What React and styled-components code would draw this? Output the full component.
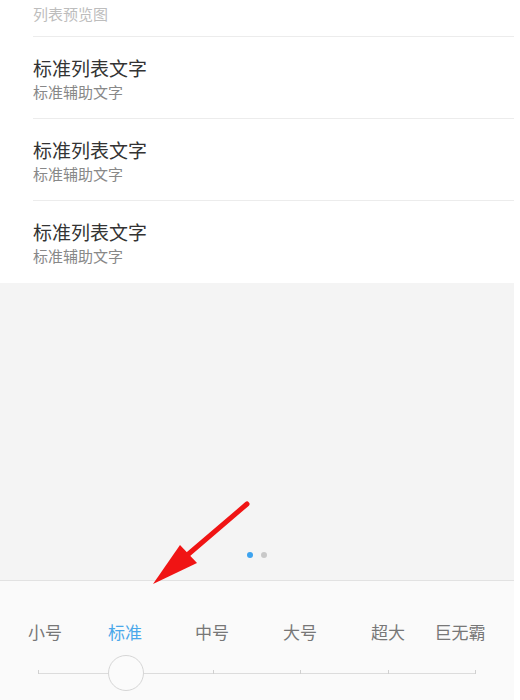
import React from "react";
import styled, { createGlobalStyle } from "styled-components";

const Global = createGlobalStyle`
  html, body { margin: 0; padding: 0; background: #ffffff; }
  body { font-family: "Noto Sans CJK SC", "Noto Sans", sans-serif; }
`;

const Page = styled.div`
  position: relative;
  width: 514px;
  height: 700px;
  display: flex;
  flex-direction: column;
  background: #ffffff;
  overflow: hidden;
`;

const List = styled.div`
  background: #ffffff;
  padding-left: 33px;
`;

const Caption = styled.div`
  height: 36px;
  display: flex;
  align-items: flex-start;
  border-bottom: 1px solid #ececec;
  font-size: 15px;
  line-height: 18px;
  color: #bdbdbd;
  & > span { display: block; margin-top: 5px; }
`;

const Item = styled.div`
  height: 82px;
  display: flex;
  flex-direction: column;
  padding-top: 19px;
  box-sizing: border-box;
  border-bottom: ${(p) => (p.$last ? "none" : "1px solid #ececec")};
`;

const Title = styled.div`
  font-size: 19px;
  line-height: 24px;
  color: #333333;
`;

const Sub = styled.div`
  margin-top: 3px;
  font-size: 15px;
  line-height: 18px;
  color: #888888;
`;

const Preview = styled.div`
  flex: 1;
  background: #f4f4f4;
  display: flex;
  flex-direction: column;
  justify-content: flex-end;
  align-items: center;
  padding-bottom: 22px;
`;

const Dots = styled.div`
  display: flex;
  gap: 8px;
`;

const Dot = styled.span`
  width: 6px;
  height: 6px;
  border-radius: 50%;
  background: ${(p) => (p.$active ? "#3da3ef" : "#c8c8c8")};
`;

const Panel = styled.div`
  height: 119px;
  border-top: 1px solid #e2e2e2;
  background: #fafafa;
  display: flex;
  flex-direction: column;
`;

const Labels = styled.div`
  display: grid;
  grid-template-columns: 78px 82px 92px 84px 92px 52px;
  padding-left: 6px;
  margin-top: 40px;
  justify-items: center;
`;

const Label = styled.div`
  font-size: 17px;
  line-height: 22px;
  white-space: nowrap;
  color: ${(p) => (p.$active ? "#4aa8ea" : "#777777")};
`;

const SliderWrap = styled.div`
  position: relative;
  margin: 30px 0 0 38px;
  width: 438px;
  height: 1px;
`;

const Track = styled.div`
  height: 1px;
  background: #dcdcdc;
  display: flex;
  justify-content: space-between;
`;

const Tick = styled.span`
  width: 1px;
  height: 4px;
  background: #d0d0d0;
  margin-top: -3px;
`;

const Thumb = styled.div`
  position: absolute;
  top: -18px;
  left: ${(p) => p.$pos}%;
  margin-left: -18px;
  width: 36px;
  height: 36px;
  box-sizing: border-box;
  border-radius: 50%;
  border: 1.5px solid #d6d6d6;
  background: #fbfbfb;
`;

const ArrowSvg = styled.svg`
  position: absolute;
  left: 0;
  top: 0;
  pointer-events: none;
`;

const labels = ["小号", "标准", "中号", "大号", "超大", "巨无霸"];
const active = 1;

export default function App() {
  return (
    <>
      <Global />
      <Page>
        <List>
          <Caption>
            <span>列表预览图</span>
          </Caption>
          {[0, 1, 2].map((i) => (
            <Item key={i} $last={i === 2}>
              <Title>标准列表文字</Title>
              <Sub>标准辅助文字</Sub>
            </Item>
          ))}
        </List>
        <Preview>
          <Dots>
            <Dot $active />
            <Dot />
          </Dots>
        </Preview>
        <Panel>
          <Labels>
            {labels.map((l, i) => (
              <Label key={l} $active={i === active}>
                {l}
              </Label>
            ))}
          </Labels>
          <SliderWrap>
            <Track>
              {labels.map((l) => (
                <Tick key={l} />
              ))}
            </Track>
            <Thumb $pos={(active / (labels.length - 1)) * 100} />
          </SliderWrap>
        </Panel>
        <ArrowSvg width="514" height="700" viewBox="0 0 514 700">
          <line x1="247" y1="504" x2="178" y2="563" stroke="#f01414" strokeWidth="5" strokeLinecap="round" />
          <polygon points="153,584 180,545 197,563" fill="#f01414" />
        </ArrowSvg>
      </Page>
    </>
  );
}
